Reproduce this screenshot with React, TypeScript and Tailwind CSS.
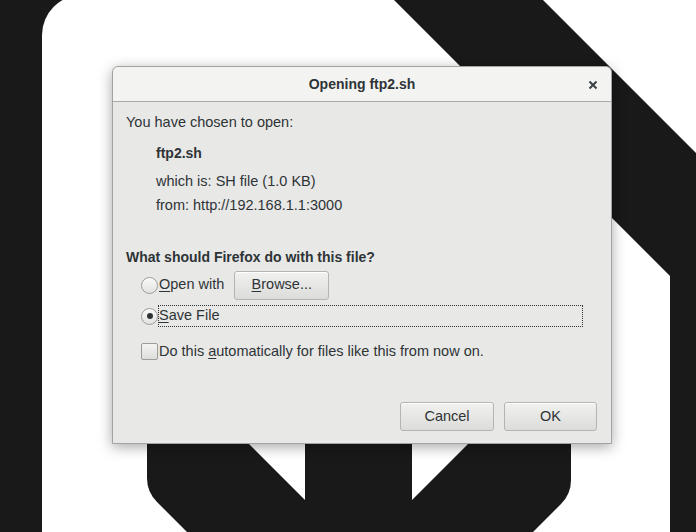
import React from "react";

const font = { fontFamily: '"Liberation Sans", Arial, sans-serif' };

function Wallpaper() {
  return (
    <svg className="absolute inset-0" width="696" height="532" viewBox="0 0 696 532">
      <rect x="0" y="0" width="696" height="532" fill="#191919" />
      <path d="M42 540 L42 35 A40 40 0 0 1 82 -5 L389 -5 L670 276 L670 540 Z" fill="#ffffff" />
      <path d="M538 -5 L701 -5 L701 158 Z" fill="#ffffff" />
      <path
        d="M147 420 L147 478 Q147 492 157 502 L192 537 L528 537 L561 504 Q571 494 571 480 L571 420 Z"
        fill="#191919"
      />
      <path d="M305 500 L305 430 L235 430 Z" fill="#ffffff" />
      <path d="M412 500 L412 430 L482 430 Z" fill="#ffffff" />
    </svg>
  );
}

function Radio({ checked }: { checked?: boolean }) {
  return (
    <span className="w-[17px] h-[17px] rounded-full border border-[#9c9c9a] bg-gradient-to-b from-[#fafafa] to-[#e2e2e0] flex items-center justify-center shrink-0">
      {checked && <span className="w-[6px] h-[6px] rounded-full bg-[#2e3436]" />}
    </span>
  );
}

function Button({ children, className = "" }: { children: React.ReactNode; className?: string }) {
  return (
    <div
      className={`h-[29px] rounded-[3px] border border-[#b4b4b1] bg-gradient-to-b from-[#f1f1ef] to-[#dcdcda] flex items-center justify-center text-[14.5px] text-[#2e3436] shadow-[inset_0_1px_0_#ffffff] ${className}`}
    >
      {children}
    </div>
  );
}

export default function App() {
  return (
    <div className="relative w-[696px] h-[532px] overflow-hidden" style={font}>
      <Wallpaper />

      {/* dialog window */}
      <div className="absolute left-[112px] top-[66px] w-[500px] h-[378px] flex flex-col rounded-t-[6px] border border-[#a3a3a1] bg-[#e8e8e7] shadow-[0_3px_14px_rgba(0,0,0,0.35)]">
        <div className="relative h-[35px] shrink-0 rounded-t-[6px] bg-[#f3f3f2] border-b border-[#a9a9a7] flex items-center justify-center">
          <span className="text-[14px] font-bold text-[#2e3436]">Opening ftp2.sh</span>
          <svg className="absolute right-[13px] top-[13px]" width="10" height="10" viewBox="0 0 10 10">
            <path d="M1.5 1.5 L8.5 8.5 M8.5 1.5 L1.5 8.5" stroke="#3a4042" strokeWidth="2" />
          </svg>
        </div>

        <div className="flex-1 flex flex-col pt-[10px] px-[13px] text-[14.5px] text-[#2e3436]">
          <div className="h-5 leading-5">You have chosen to open:</div>
          <div className="h-5 leading-5 mt-[11px] ml-[30px] text-[14px] font-bold">ftp2.sh</div>
          <div className="h-5 leading-5 mt-[8px] ml-[30px]">which is: SH file (1.0 KB)</div>
          <div className="h-5 leading-5 mt-[4px] ml-[30px]">from: http://192.168.1.1:3000</div>
          <div className="h-5 leading-5 mt-[32px] text-[14px] font-bold">
            What should Firefox do with this file?
          </div>

          <div className="h-[28px] mt-[4px] ml-[15px] flex items-center">
            <Radio />
            <span className="ml-[1px]">
              <span className="underline underline-offset-2">O</span>pen with
            </span>
            <Button className="ml-[10px] w-[95px]">
              <span>
                <span className="underline underline-offset-2">B</span>rowse...
              </span>
            </Button>
          </div>

          <div className="h-[22px] mt-[6px] ml-[15px] flex items-center">
            <Radio checked />
            <span className="w-[425px] h-[22px] border border-dotted border-[#2e3436] flex items-center">
              <span className="underline underline-offset-2">S</span>ave File
            </span>
          </div>

          <div className="h-5 mt-[14px] ml-[15px] flex items-center">
            <span className="w-[17px] h-[17px] rounded-[2px] border border-[#9c9c9a] bg-gradient-to-b from-[#f4f4f3] to-[#dededc] shrink-0" />
            <span className="ml-[1px] leading-5">
              Do this <span className="underline underline-offset-2">a</span>utomatically for files like this from now on.
            </span>
          </div>

          <div className="mt-auto mb-[12px] mr-[1px] flex justify-end gap-[10px]">
            <Button className="w-[94px]">Cancel</Button>
            <Button className="w-[93px]">OK</Button>
          </div>
        </div>
      </div>
    </div>
  );
}
